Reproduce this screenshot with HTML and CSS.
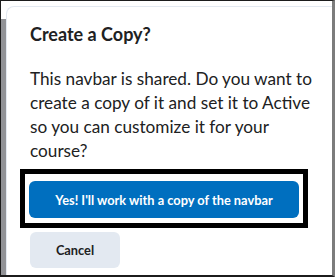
FILE: index.html
```html
<!DOCTYPE html>
<html>
<head lang="en">
    <meta charset="UTF-8">
    <title>Create a Copy?</title>
    <link rel="stylesheet" href="styles.css">
</head>
<body>
<div class="shot">
    <div class="sideStrip"></div>
    <div class="dialog">
        <h2 class="dialogTitle">Create a Copy?</h2>
        <p class="dialogText">This navbar is shared. Do you want to create a copy of it and set it to Active so you can customize it for your course?</p>
        <div class="highlightBox">
            <button class="btn btnPrimary">Yes! I'll work with a copy of the navbar</button>
        </div>
        <button class="btn btnCancel">Cancel</button>
    </div>
</div>
</body>
</html>
```

FILE: styles.css
```css
*{
    margin: 0;
    padding: 0;
    box-sizing: border-box;
}
body{
    background-color: white;
    font-family: Lato, "Noto Sans", sans-serif;
    color: #202122;
}
.shot{
    width: 335px;
    height: 277px;
    display: flex;
    overflow: hidden;
    border-top: 1px solid #1c1c1c;
    border-left: 1px solid #1c1c1c;
    border-bottom: 2px solid #1c1c1c;
    border-right: 3px solid #7c7c7c;
}
.sideStrip{
    width: 5px;
    margin-top: 18px;
    background-color: #929397;
}
.dialog{
    flex: 1;
    margin-top: 5px;
    padding: 15px 0 0 23px;
    background-color: white;
    border-top: 1px solid #e3e9f1;
    border-left: 1px solid #e3e9f1;
    border-top-left-radius: 8px;
}
.dialogTitle{
    font-size: 18px;
    line-height: 24px;
    font-weight: bold;
}
.dialogText{
    width: 290px;
    margin-top: 21px;
    font-size: 17.2px;
    line-height: 24px;
}
.highlightBox{
    display: inline-block;
    margin-top: 6px;
    margin-left: -10px;
    padding: 7px 4px 5px 4px;
    border: 5px solid black;
}
.btn{
    display: block;
    border: none;
    border-radius: 6px;
    font-family: Lato, "Noto Sans", sans-serif;
    font-size: 12.8px;
    font-weight: bold;
}
.btnPrimary{
    width: 270px;
    height: 37px;
    background-color: #006fbf;
    color: white;
}
.btnCancel{
    width: 90px;
    height: 36px;
    margin-top: 4px;
    background-color: #e3e9f1;
    color: #202122;
}
```
